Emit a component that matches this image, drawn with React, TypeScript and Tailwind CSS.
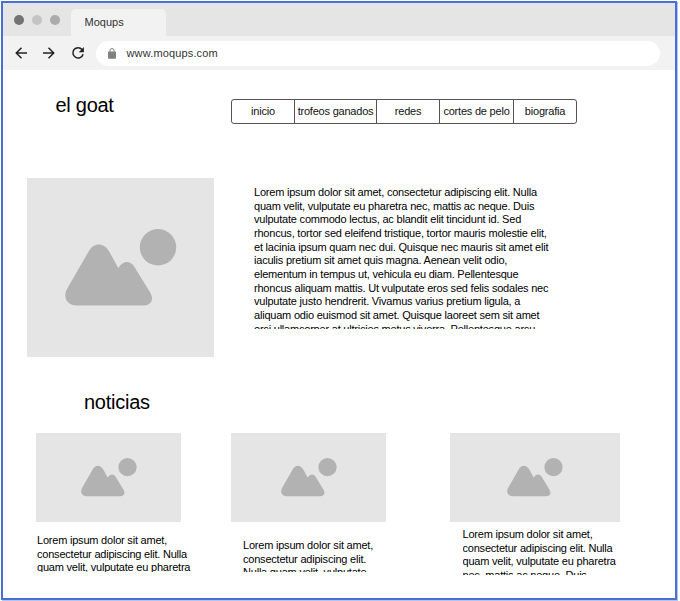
import React from "react";

const paragraph = [
  "Lorem ipsum dolor sit amet, consectetur adipiscing elit. Nulla",
  "quam velit, vulputate eu pharetra nec, mattis ac neque. Duis",
  "vulputate commodo lectus, ac blandit elit tincidunt id. Sed",
  "rhoncus, tortor sed eleifend tristique, tortor mauris molestie elit,",
  "et lacinia ipsum quam nec dui. Quisque nec mauris sit amet elit",
  "iaculis pretium sit amet quis magna. Aenean velit odio,",
  "elementum in tempus ut, vehicula eu diam. Pellentesque",
  "rhoncus aliquam mattis. Ut vulputate eros sed felis sodales nec",
  "vulputate justo hendrerit. Vivamus varius pretium ligula, a",
  "aliquam odio euismod sit amet. Quisque laoreet sem sit amet",
  "orci ullamcorper at ultricies metus viverra. Pellentesque arcu",
];

const tabs = [
  { label: "inicio", width: "w-[63px]" },
  { label: "trofeos ganados", width: "w-[82px]" },
  { label: "redes", width: "w-[63px]" },
  { label: "cortes de pelo", width: "w-[74px]" },
  { label: "biografia", width: "w-[62px]" },
];

const news = [
  {
    card: "ml-[36px] w-[160px]",
    image: "w-[145px]",
    text: "mt-[12px] ml-[1px] h-[38px]",
    lines: ["Lorem ipsum dolor sit amet,", "consectetur adipiscing elit. Nulla", "quam velit, vulputate eu pharetra"],
  },
  {
    card: "ml-[35px] w-[155px]",
    image: "w-[155px]",
    text: "mt-[17px] ml-[12px] h-[33px]",
    lines: ["Lorem ipsum dolor sit amet,", "consectetur adipiscing elit.", "Nulla quam velit, vulputate"],
  },
  {
    card: "ml-[64px] w-[170px]",
    image: "w-[170px]",
    text: "mt-[6px] ml-[12.5px] h-[47px]",
    lines: [
      "Lorem ipsum dolor sit amet,",
      "consectetur adipiscing elit. Nulla",
      "quam velit, vulputate eu pharetra",
      "nec, mattis ac neque. Duis",
    ],
  },
];

function Picture({ className }: { className: string }) {
  return (
    <svg viewBox="0 0 112 78" className={className} fill="#b2b2b2">
      <circle cx="93" cy="18.3" r="18.2" />
      <path d="M2.4 59.3 L23.3 23 C28.8 13.2 38.6 13.2 44.3 22.7 L53.3 39 C58.3 31.3 65 31.4 69.3 37.7 L85 63.3 C89.5 70.8 86 76.5 78 76.5 H12 C1.5 76.5 -2.5 68 2.4 59.3 Z" />
    </svg>
  );
}

function Lines({ lines }: { lines: string[] }) {
  return (
    <>
      {lines.map((line) => (
        <p key={line} className="whitespace-nowrap">{line}</p>
      ))}
    </>
  );
}

export default function App() {
  return (
    <div className="h-[601px] w-[680px] overflow-hidden bg-white pt-px pl-px font-['Liberation_Sans',Arial,sans-serif] text-black">
      <div className="flex h-[599px] w-[676px] flex-col border-2 border-[#4a6fd4] bg-white shadow-[1px_1px_0_#b4c4ee]">
        <header>
          <div className="flex h-[33px] bg-[#e5e5e5] pt-[6px] pl-[11px]">
            <div className="flex gap-[8px] pt-[6px]">
              <span className="size-[10px] rounded-full bg-[#737373]" />
              <span className="size-[10px] rounded-full bg-[#c4c4c4]" />
              <span className="size-[10px] rounded-full bg-[#ababab]" />
            </div>
            <div className="ml-[11px] flex w-[95px] items-center rounded-t-[5px] bg-[#f2f2f2] pl-[13.5px] text-[11px] text-[#333]">
              Moqups
            </div>
          </div>
          <div className="flex h-[34px] items-center bg-[#f2f2f2] pr-[15px] pl-[12px]">
            <svg className="h-[14px] w-[70px] shrink-0" viewBox="0 0 70 14" fill="none" stroke="#222" strokeWidth="1.5">
              <path d="M12 7H1.5M6.5 1.8 1.3 7l5.2 5.2" />
              <path d="M28 7h10.5M33.5 1.8 38.7 7l-5.2 5.2" />
              <path d="M67.1 3.5A5.2 5.2 0 1 0 68.1 8.3" />
              <path d="M68.9 1.1v5.2h-5.2z" fill="#222" stroke="none" />
            </svg>
            <div className="ml-[11px] flex h-[25px] flex-1 items-center rounded-full bg-white pl-[12px] text-[11px] tracking-[0.15px] text-[#333]">
              <svg className="mr-[10.5px] h-[11px] w-[8px]" viewBox="0 0 8 11">
                <rect y="3.5" width="8" height="7.2" rx="0.8" fill="#808080" />
                <path d="M2 4V2.5a2 2 0 0 1 4 0V4" fill="none" stroke="#808080" />
              </svg>
              www.moqups.com
            </div>
          </div>
        </header>
        <main>
          <div className="flex h-[108px] pt-[29px]">
            <h1 className="-mt-[5px] ml-[52.5px] w-[175.5px] text-[20px] leading-[23px] tracking-[-0.28px]">el goat</h1>
            <nav className="flex h-[25px] w-[346px] divide-x divide-[#555] rounded-[3px] border border-[#555] text-[11px] tracking-[-0.21px] text-[#111]">
              {tabs.map((tab) => (
                <a key={tab.label} className={`flex shrink-0 items-center justify-center whitespace-nowrap ${tab.width}`}>
                  {tab.label}
                </a>
              ))}
            </nav>
          </div>
          <section className="flex h-[179px] pl-[24px]">
            <div className="flex w-[187px] justify-center bg-[#e5e5e5] pt-[51px]">
              <Picture className="h-[78px] w-[112px]" />
            </div>
            <div className="mt-[8px] ml-[40px] h-[143px] w-[310px] overflow-hidden text-[11px] leading-[13.65px] tracking-[-0.21px]">
              <Lines lines={paragraph} />
            </div>
          </section>
          <h2 className="mt-[34px] ml-[81px] text-[20px] leading-[23px] tracking-[-0.26px]">noticias</h2>
          <section className="mt-[19px] flex -ml-[3px]">
            {news.map((item, index) => (
              <article key={index} className={`shrink-0 ${item.card}`}>
                <div className={`flex h-[89px] justify-center bg-[#e5e5e5] pt-[25px] ${item.image}`}>
                  <Picture className="h-[39px] w-[56px]" />
                </div>
                <div className={`overflow-hidden text-[11px] leading-[13.65px] tracking-[-0.21px] ${item.text}`}>
                  <Lines lines={item.lines} />
                </div>
              </article>
            ))}
          </section>
        </main>
      </div>
    </div>
  );
}
